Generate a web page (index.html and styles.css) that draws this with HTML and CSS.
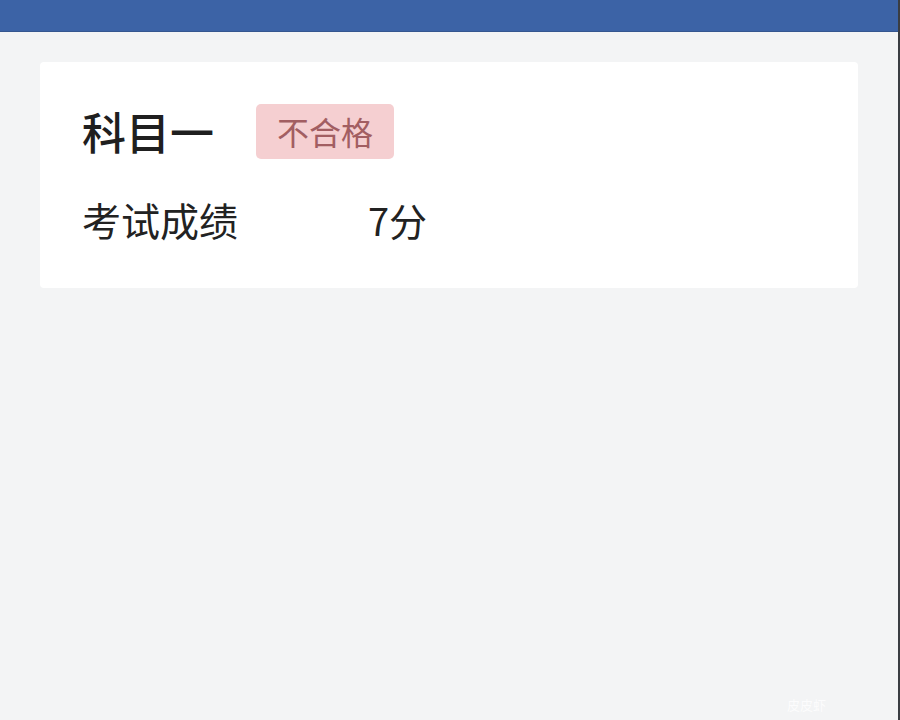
FILE: index.html
```html
<!DOCTYPE html>
<html lang="zh-CN">
<head>
    <meta charset="UTF-8">
    <meta name="viewport" content="width=device-width, initial-scale=1.0">
    <title>考试成绩</title>
    <link rel="stylesheet" href="styles.css">
</head>
<body>
    <!-- Top bar -->
    <div class="topbar"></div>

    <!-- Result card -->
    <div class="card">
        <div class="card-head">
            <span class="subject">科目一</span>
            <span class="badge">不合格</span>
        </div>
        <div class="score-row">
            <span class="score-label">考试成绩</span>
            <span class="score-value">7分</span>
        </div>
    </div>

    <div class="watermark">皮皮虾</div>
</body>
</html>
```

FILE: styles.css
```css
html, body {
    height: 100%;
}
body {
    margin: 0;
    padding: 0;
    background-color: #f3f4f5;
    color: #222;
    font-family: "Noto Sans CJK SC", "Noto Sans", sans-serif;
    border-right: 2px solid #3a3d42;
    box-sizing: border-box;
    position: relative;
    overflow: hidden;
}
.topbar {
    height: 31px;
    background-color: #3c63a6;
    border-bottom: 1px solid #35568f;
}
.card {
    margin: 30px 40px 0 40px;
    padding: 41px 42px 44px;
    background-color: #fff;
    border-radius: 4px;
}
.card-head {
    display: flex;
    align-items: center;
    gap: 42px;
    height: 56px;
}
.subject {
    font-size: 44px;
    font-weight: 500;
    color: #1f1f1f;
}
.badge {
    display: inline-block;
    padding: 0 21px;
    height: 55px;
    line-height: 55px;
    font-size: 32px;
    color: #a25e62;
    background-color: #f5cfd1;
    border-radius: 5px;
}
.score-row {
    display: flex;
    align-items: center;
    margin-top: 35px;
    height: 50px;
}
.score-label {
    width: 286px;
    font-size: 39px;
    color: #222;
}
.score-value {
    font-size: 38px;
    color: #222;
}
.watermark {
    position: absolute;
    right: 72px;
    bottom: 6px;
    font-size: 13px;
    color: #fff;
    opacity: 0.8;
}
```
